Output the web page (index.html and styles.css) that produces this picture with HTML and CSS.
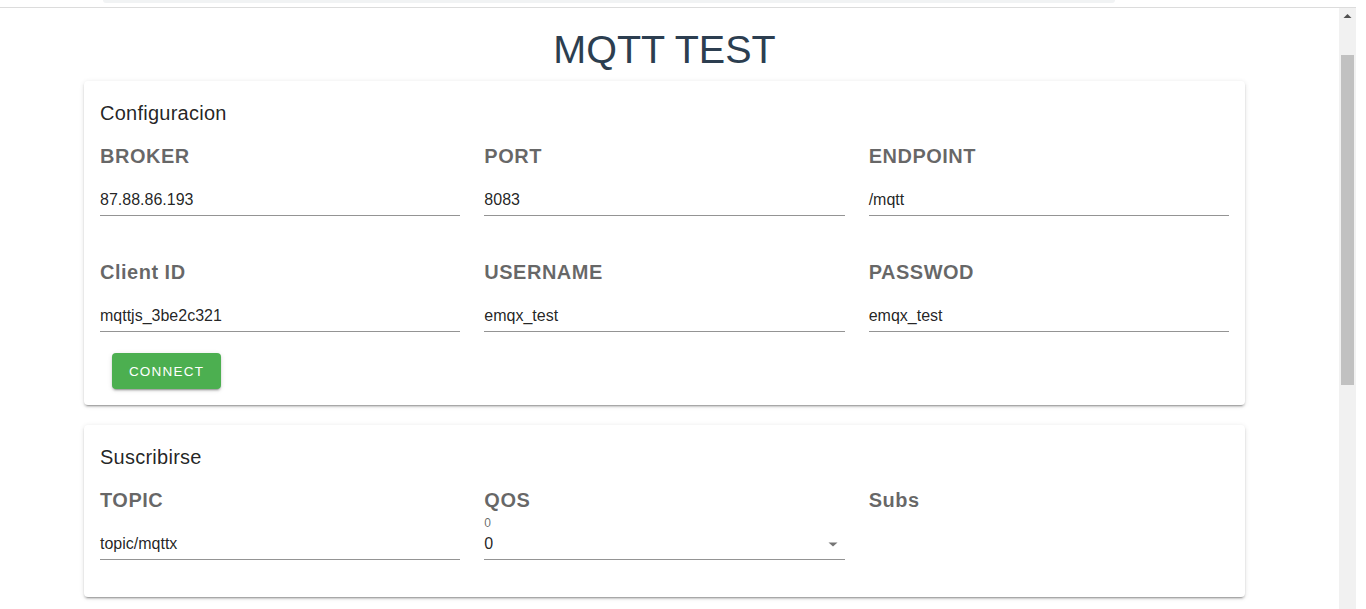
FILE: index.html
```html
<!DOCTYPE html>
<html lang="es">
<head>
<meta charset="utf-8">
<title>MQTT TEST</title>
<link rel="stylesheet" href="styles.css">
</head>
<body>
<div class="topbar"><div class="tab-band"></div></div>
<div class="window">
  <div class="page">
    <div class="app">
      <h1 class="app-title">MQTT TEST</h1>
      <div class="container">
        <section class="card card-config">
          <div class="card-title">Configuracion</div>
          <div class="card-body">
            <div class="row">
              <div class="col">
                <h3 class="field-label">BROKER</h3>
                <div class="field"><div class="field-value">87.88.86.193</div></div>
              </div>
              <div class="col">
                <h3 class="field-label">PORT</h3>
                <div class="field"><div class="field-value">8083</div></div>
              </div>
              <div class="col">
                <h3 class="field-label">ENDPOINT</h3>
                <div class="field"><div class="field-value">/mqtt</div></div>
              </div>
            </div>
            <div class="row row-next">
              <div class="col">
                <h3 class="field-label">Client ID</h3>
                <div class="field"><div class="field-value">mqttjs_3be2c321</div></div>
              </div>
              <div class="col">
                <h3 class="field-label">USERNAME</h3>
                <div class="field"><div class="field-value">emqx_test</div></div>
              </div>
              <div class="col">
                <h3 class="field-label">PASSWOD</h3>
                <div class="field"><div class="field-value">emqx_test</div></div>
              </div>
            </div>
            <div class="actions">
              <button class="btn-connect" type="button">CONNECT</button>
            </div>
          </div>
        </section>
        <section class="card card-subs">
          <div class="card-title">Suscribirse</div>
          <div class="card-body">
            <div class="row">
              <div class="col">
                <h3 class="field-label">TOPIC</h3>
                <div class="field"><div class="field-value">topic/mqttx</div></div>
              </div>
              <div class="col">
                <h3 class="field-label">QOS</h3>
                <div class="field field-select">
                  <div class="select-label">0</div>
                  <div class="select-line">
                    <div class="field-value">0</div>
                    <svg class="select-arrow" width="24" height="24" viewBox="0 0 24 24"><path d="M7.5 10.5 L12 14.5 L16.5 10.5 Z" fill="rgba(0,0,0,0.54)"/></svg>
                  </div>
                </div>
              </div>
              <div class="col">
                <h3 class="field-label">Subs</h3>
              </div>
            </div>
          </div>
        </section>
      </div>
    </div>
  </div>
  <div class="scrollbar">
    <div class="scroll-arrow"><svg width="17" height="17" viewBox="0 0 17 17"><path d="M4.5 10 L8.5 6 L12.5 10 Z" fill="#505050"/></svg></div>
    <div class="scroll-thumb"></div>
  </div>
</div>
</body>
</html>
```
FILE: styles.css
```css
html, body {
  margin: 0;
  padding: 0;
}
body {
  width: 1366px;
  height: 609px;
  overflow: hidden;
  background: #ffffff;
  font-family: "Liberation Sans", Arial, sans-serif;
  color: rgba(0, 0, 0, 0.87);
}
.topbar {
  width: 1356px;
  height: 7px;
  border-bottom: 1px solid #dcdcdc;
}
.tab-band {
  margin-left: 103px;
  width: 1012px;
  height: 3px;
  background: #f1f3f4;
  border-radius: 0 0 8px 8px;
}
.window {
  display: flex;
  height: 601px;
}
.page {
  width: 1339px;
  height: 601px;
  overflow: hidden;
}
.app {
  width: 1329px;
}
.app-title {
  margin: 0;
  padding-top: 17px;
  font-size: 39.5px;
  line-height: 48px;
  font-weight: normal;
  text-align: center;
  color: #2c3e50;
}
.container {
  width: 1185px;
  box-sizing: border-box;
  margin: 8px auto 0;
  padding: 0 12px;
  display: flex;
  flex-direction: column;
  gap: 20px;
}
.card {
  background: #ffffff;
  border-radius: 4px;
  box-shadow: 0 3px 1px -2px rgba(0, 0, 0, 0.2), 0 2px 2px 0 rgba(0, 0, 0, 0.14), 0 1px 5px 0 rgba(0, 0, 0, 0.12);
}
.card-title {
  padding: 16px;
  font-size: 20px;
  line-height: 32px;
  letter-spacing: 0.0125em;
  color: rgba(0, 0, 0, 0.87);
}
.card-body {
  padding: 0 16px;
}
.card-config .card-body {
  padding-bottom: 16px;
}
.card-subs .card-body {
  padding-bottom: 37px;
}
.row {
  display: flex;
  margin: 0 -12px;
}
.row-next {
  margin-top: 45px;
}
.col {
  flex: 1 1 0;
  padding: 0 12px;
  min-width: 0;
}
.field-label {
  margin: 0;
  font-size: 20px;
  line-height: 22px;
  font-weight: bold;
  letter-spacing: 0.5px;
  color: rgba(0, 0, 0, 0.6);
}
.field {
  padding-top: 21px;
  padding-bottom: 3px;
  border-bottom: 1px solid rgba(0, 0, 0, 0.42);
}
.field-value {
  font-size: 16px;
  line-height: 24px;
  height: 24px;
  color: rgba(0, 0, 0, 0.87);
  white-space: nowrap;
}
.field-select {
  padding-top: 5px;
}
.select-label {
  font-size: 12px;
  line-height: 14px;
  height: 14px;
  margin-bottom: 2px;
  color: rgba(0, 0, 0, 0.6);
}
.select-line {
  display: flex;
  align-items: center;
  justify-content: space-between;
}
.select-arrow {
  display: block;
  margin-right: 0;
}
.actions {
  margin-top: 21px;
  padding-left: 12px;
}
.btn-connect {
  display: block;
  height: 36px;
  padding: 0 16px;
  width: 109px;
  border: none;
  border-radius: 4px;
  background: #4caf50;
  color: #ffffff;
  font-family: "Liberation Sans", Arial, sans-serif;
  font-size: 13.5px;
  letter-spacing: 0.0892em;
  box-shadow: 0 3px 1px -2px rgba(0, 0, 0, 0.2), 0 2px 2px 0 rgba(0, 0, 0, 0.14), 0 1px 5px 0 rgba(0, 0, 0, 0.12);
}
.scrollbar {
  width: 17px;
  height: 601px;
  background: #f1f1f1;
  display: flex;
  flex-direction: column;
  align-items: center;
}
.scroll-arrow {
  width: 17px;
  height: 17px;
}
.scroll-arrow svg {
  display: block;
}
.scroll-thumb {
  margin-top: 30px;
  width: 13px;
  height: 330px;
  background: #c1c1c1;
}
```
